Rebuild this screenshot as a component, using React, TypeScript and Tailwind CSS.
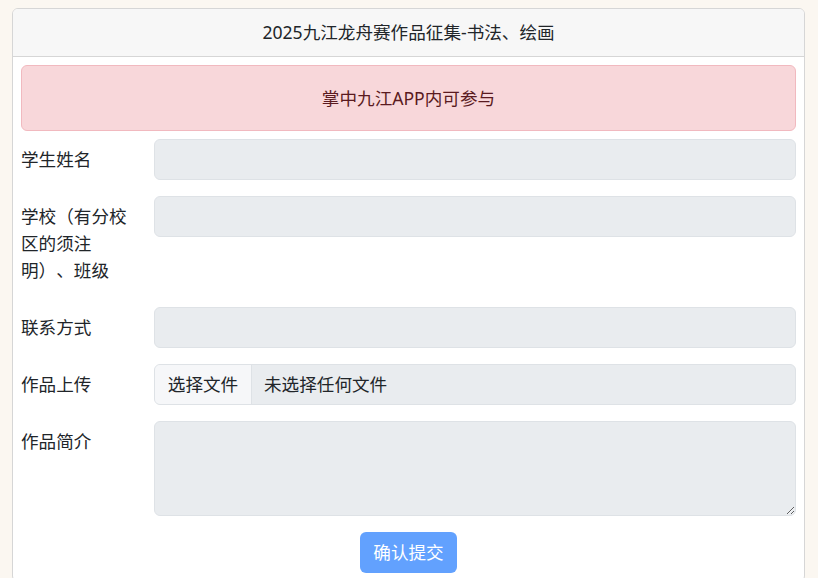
import React from 'react';

const FONT = { fontFamily: '"Noto Sans", "Noto Sans CJK SC", sans-serif' };

interface FieldRowProps {
    label: string;
    children: React.ReactNode;
}

const FieldRow: React.FC<FieldRowProps> = ({ label, children }) => (
    <div className="flex mb-4">
        <label className="w-[109px] shrink-0 py-[7px] leading-[27px] [text-spacing-trim:space-all]">{label}</label>
        <div className="ml-[24px] flex-1">{children}</div>
    </div>
);

const inputCls =
    'block w-full h-[41px] rounded-[6px] border border-[#dee2e6] bg-[#e9ecef] px-3 outline-none';

export default function App() {
    return (
        <div className="min-h-[578px] bg-[#fbf7f1] pt-2 text-[17.6px] text-[#212529]" style={FONT}>
            <div className="ml-3 w-[793px] rounded-[6px] border border-[#d6d6d6] bg-white overflow-hidden">
                {/* header */}
                <div className="bg-[#f7f7f7] border-b border-[#d6d6d6] py-[10px] text-center leading-[26.5px]">
                    2025九江龙舟赛作品征集-书法、绘画
                </div>

                <div className="p-2">
                    <div className="mb-2 rounded-[6px] border border-[#f1b9bf] bg-[#f8d7da] py-[19px] text-center leading-[26.5px] text-[#5a1a20]">
                        掌中九江APP内可参与
                    </div>

                    <FieldRow label="学生姓名">
                        <input className={inputCls} readOnly />
                    </FieldRow>

                    <FieldRow label="学校（有分校区的须注明）、班级">
                        <input className={inputCls} readOnly />
                    </FieldRow>

                    <FieldRow label="联系方式">
                        <input className={inputCls} readOnly />
                    </FieldRow>

                    <FieldRow label="作品上传">
                        <div className="flex h-[41px] w-full overflow-hidden rounded-[6px] border border-[#dee2e6] bg-[#e9ecef] leading-[26.5px]">
                            <span className="flex w-[97px] items-center justify-center border-r border-[#dee2e6] bg-[#f6f7f9]">选择文件</span>
                            <span className="flex items-center px-3">未选择任何文件</span>
                        </div>
                    </FieldRow>

                    <FieldRow label="作品简介">
                        <textarea className="block h-[95px] w-full rounded-[6px] border border-[#dee2e6] bg-[#e9ecef] px-3 py-[6px] outline-none" readOnly />
                    </FieldRow>

                    <div className="flex justify-center">
                        <button className="h-[41px] w-[97px] rounded-[6px] bg-[#62a1fe] leading-[26.5px] text-white">
                            确认提交
                        </button>
                    </div>
                </div>
            </div>
        </div>
    );
}
